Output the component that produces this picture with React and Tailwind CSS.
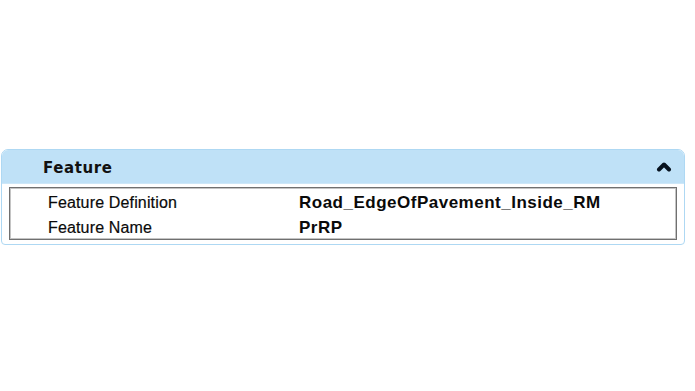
import React from "react";

// Property panel: "Feature" group with two rows
const rows = [
    { label: "Feature Definition", value: "Road_EdgeOfPavement_Inside_RM" },
    { label: "Feature Name", value: "PrRP" },
];

const ChevronUp = () => (
    <svg width="16" height="12" viewBox="0 0 16 12" className="block -mt-[4px]">
        <path
            d="M3 9.5 L8 4.5 L13 9.5"
            fill="none"
            stroke="#07121f"
            strokeWidth="4"
            strokeLinecap="round"
            strokeLinejoin="round"
        />
    </svg>
);

const App = () => {
    return (
        <div className="w-[695px] h-[391px] bg-white pt-[149px] pl-[1px] font-['Liberation_Sans',Arial,sans-serif]">
            <div className="w-[684px] h-[96px] flex flex-col border border-[#aed8f3] rounded-t-[7px] rounded-b-[4px] bg-white">
                <div className="h-[34px] flex items-center justify-between pl-[41px] pr-[12px] pt-[3px] bg-[#bfe1f7] rounded-t-[6px] border-b border-[#cde7f8]">
                    <span className="font-['DejaVu_Sans',sans-serif] font-bold text-[15px] tracking-[0.6px] text-[#111]">
                        Feature
                    </span>
                    <ChevronUp />
                </div>
                <div className="flex-1 px-[7px] pt-[3px] pb-[4px]">
                    <div className="h-[53px] border border-[#707070] shadow-[inset_0_0_0_1px_#c4c4c4] pt-[2px]">
                        {rows.map((r) => (
                            <div key={r.label} className="h-[25px] flex items-center pl-[38px] text-[#0a0a0a]">
                                <span className="w-[251px] text-[16px] tracking-[0.15px] [-webkit-text-stroke:0.2px_#0a0a0a]">{r.label}</span>
                                <span className="font-bold text-[17px] tracking-[0.5px]">{r.value}</span>
                            </div>
                        ))}
                    </div>
                </div>
            </div>
        </div>
    );
};

export default App;
